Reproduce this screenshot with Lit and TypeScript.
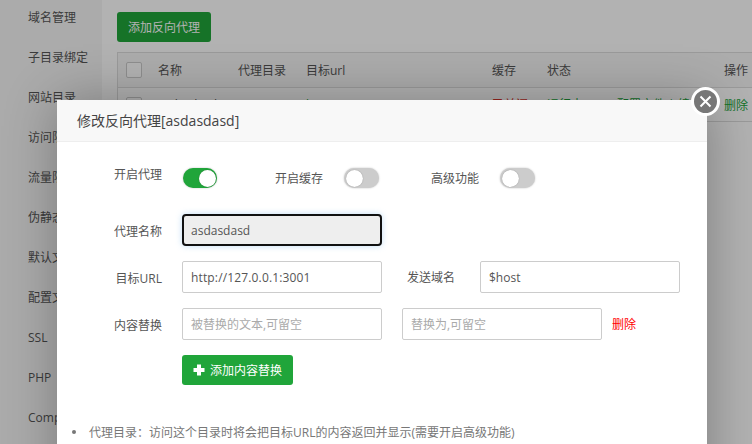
import { LitElement, html, css } from "lit";
import { customElement } from "lit/decorators.js";

const menu = ["域名管理", "子目录绑定", "网站目录", "访问限制", "流量限制", "伪静态", "默认文档", "配置文件", "SSL", "PHP", "Composer"];

@customElement("app-root")
export class AppRoot extends LitElement {
  static styles = css`
    :host { display: block; width: 752px; height: 444px; position: relative; overflow: hidden; background: #fff;
      font-family: "Open Sans", "Noto Sans CJK SC", sans-serif; font-size: 12px; color: #555; }
    * { box-sizing: border-box; }
    .page { display: flex; height: 444px; }
    .side { width: 102px; flex: none; background: #f5f5f5; }
    .side div { height: 40px; line-height: 36px; padding-left: 28px; white-space: nowrap; color: #555; }
    .main { flex: 1; background: #fff; padding: 12px 0 0 15px; min-width: 0; }
    .add { width: 94px; height: 30px; background: #20a53a; color: #fff; border-radius: 3px; display: flex; align-items: center; justify-content: center; }
    .table { margin-top: 10px; width: 650px; border: 1px solid #ddd; border-bottom: 0; }
    .tr { display: grid; grid-template-columns: 40px 80px 68px 186px 55px 70px 107px auto; align-items: center; white-space: nowrap; border-bottom: 1px solid #ddd; }
    .head { height: 35px; background: #f6f6f6; }
    .row { height: 34px; }
    .up { padding-bottom: 1px; }
    .cb { width: 16px; height: 16px; border: 1px solid #ccc; border-radius: 2px; margin-left: 8px; background: #fff; }
    .g { color: #20a53a; }
    .r { color: #d9342c; }
    .scrim { position: absolute; inset: 0; background: rgba(0,0,0,.3); }
    .modal { position: absolute; left: 57px; top: 100px; width: 650px; height: 400px; background: #fff; box-shadow: 1px 1px 50px rgba(0,0,0,.3); }
    .title { height: 42px; background: #f8f8f8; border-bottom: 1px solid #eee; padding-left: 20px; line-height: 41px; font-size: 14px; color: #444; }
    .close { position: absolute; right: -13px; top: -13px; width: 29px; height: 29px; border-radius: 50%; background: #777; border: 3px solid #fff; display: flex; align-items: center; justify-content: center; }
    .body { padding-top: 21px; }
    .toggles { display: flex; height: 31px; align-items: flex-start; }
    .lbl { width: 105px; text-align: right; color: #555; flex: none; }
    .toggles .lbl { line-height: 24px; }
    .sw { width: 35px; height: 20px; border-radius: 10px; background: #ccc; position: relative; flex: none; margin-top: 5px; box-shadow: 0 0 2px rgba(0,0,0,.25); }
    .sw::after { content: ""; position: absolute; top: 1.5px; left: 1.5px; width: 17px; height: 17px; border-radius: 50%; background: #fff; box-shadow: 0 0 1px rgba(0,0,0,.4); }
    .sw.on { background: #20a53a; width: 34px; margin-left: 21px; }
    .sw.on::after { left: 16px; }
    .t2 { margin-left: 58px; line-height: 24px; padding-top: 4px; margin-right: 21px; }
    .t3 { margin-left: 52px; line-height: 24px; padding-top: 4px; margin-right: 21px; }
    .gap { height: 20px; }
    .form { display: flex; align-items: center; height: 32px; margin-bottom: 15px; }
    .form .lbl { padding-top: 1px; }
    .in { width: 200px; height: 32px; border: 1px solid #ccc; border-radius: 2px; margin-left: 20px; padding-left: 8px; line-height: 31px; color: #555; flex: none; background: #fff; }
    .in.ph { color: #aaa; }
    .in.ro { background: #eee; border: 2px solid #111; border-radius: 4px; padding-left: 7px; box-shadow: 0 0 6px rgba(102,175,233,.4); line-height: 29px; }
    .url { letter-spacing: .15px; }
    .l2 { margin-left: 25px; width: 48px; flex: none; }
    .in2 { margin-left: 25px; }
    .del { color: #f00; margin-left: 10px; }
    .btn { margin-left: 125px; width: 111px; height: 30px; background: #20a53a; color: #fff; border-radius: 3px; display: flex; align-items: center; justify-content: center; gap: 5px; }
    ul { margin: 38px 0 0; padding: 0 0 0 15px; color: #777; list-style: none; }
    li { display: flex; align-items: center; gap: 13px; }
    li::before { content: ""; width: 4px; height: 4px; border-radius: 50%; background: #777; flex: none; }
  `;

  render() {
    return html`
      <div class="page">
        <div class="side">${menu.map((m) => html`<div>${m}</div>`)}</div>
        <div class="main">
          <div class="add">添加反向代理</div>
          <div class="table">
            <div class="tr head">
              <div class="cb"></div>
              <span>名称</span><span>代理目录</span><span>目标url</span><span>缓存</span><span>状态</span><span></span><span>操作</span>
            </div>
            <div class="tr row">
              <div class="cb"></div>
              <span class="up">asdasdasd</span><span class="up">/</span><span class="g up">http://127.0.0.1:3001</span><span class="r up">已关闭</span><span class="g up">运行中</span><span class="g up">配置文件 | 编辑</span><span class="g">删除</span>
            </div>
          </div>
        </div>
      </div>
      <div class="scrim"></div>
      <div class="modal">
        <div class="title">修改反向代理[asdasdasd]</div>
        <div class="close">
          <svg width="13" height="13" viewBox="0 0 13 13"><path d="M1.5 1.5L11.5 11.5M11.5 1.5L1.5 11.5" stroke="#fff" stroke-width="2" fill="none"/></svg>
        </div>
        <div class="body">
          <div class="toggles">
            <div class="lbl">开启代理</div>
            <div class="sw on"></div>
            <div class="t2">开启缓存</div>
            <div class="sw"></div>
            <div class="t3">高级功能</div>
            <div class="sw"></div>
          </div>
          <div class="gap"></div>
          <div class="form"><div class="lbl">代理名称</div><div class="in ro">asdasdasd</div></div>
          <div class="form"><div class="lbl">目标URL</div><div class="in url">http://127.0.0.1:3001</div><div class="l2">发送域名</div><div class="in in2">$host</div></div>
          <div class="form"><div class="lbl">内容替换</div><div class="in ph">被替换的文本,可留空</div><div class="in ph">替换为,可留空</div><div class="del">删除</div></div>
          <div class="btn">
            <svg width="12" height="12" viewBox="0 0 12 12"><path d="M4 0.5h4v3.5h3.5v4H8v3.5H4V8H0.5V4H4z" fill="#fff"/></svg>
            <span>添加内容替换</span>
          </div>
          <ul><li>代理目录：访问这个目录时将会把目标URL的内容返回并显示(需要开启高级功能)</li></ul>
        </div>
      </div>
    `;
  }
}
